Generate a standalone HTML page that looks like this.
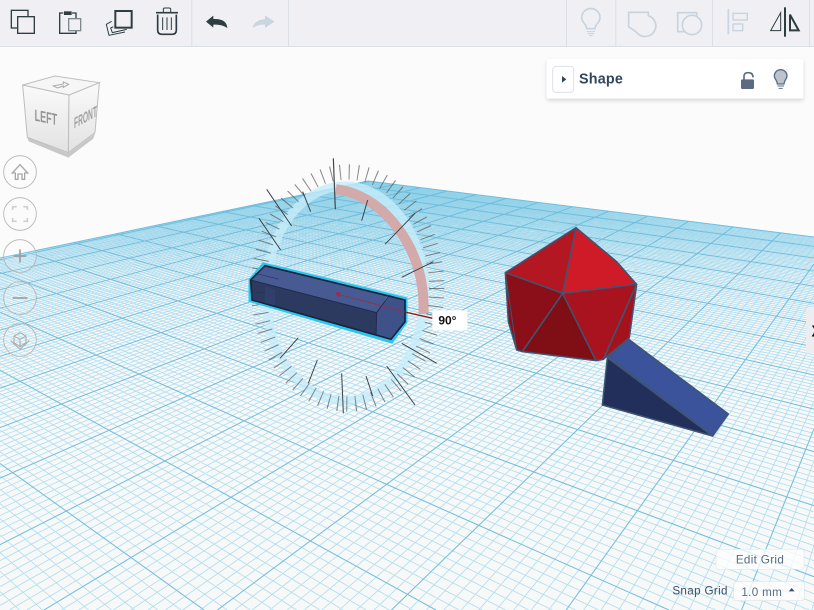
<!DOCTYPE html>
<html><head><meta charset="utf-8"><title>Workplane</title>
<style>
html,body{margin:0;padding:0;background:#fbfbfb;width:814px;height:610px;overflow:hidden;}
#stage{position:relative;width:814px;height:610px;overflow:hidden;contain:paint;background:#fbfbfb;font-family:"Liberation Sans",sans-serif;}
svg{position:absolute;left:0;top:0;}
</style></head><body><div id="stage">
<svg id="g" width="814" height="610" viewBox="0 0 814 610">
<polygon points="368,181 814,237 814,610 0,610 0,258" fill="#f7f8f8"/>
<path id="mn" fill="none" stroke="#aeddf0" stroke-width=".8"/>
<path id="mj" fill="none" stroke="#74bedb" stroke-width="1"/>
</svg>
<script>
(function(){
function P(t,s){var w=1-t-s;return ((368+555*t-963*s)/w).toFixed(2)+' '+((181-65*t-56*s)/w).toFixed(2);}
var mn='',mj='',i,v,a,b,d;
for(i=-128;i<=60;i++){v=.4307+i*.00334;if(v<0)continue;
 a=Math.max(0,(963*v-368)/555);
 b=Math.min((429-554*v)/545,(446+149*v)/1369);
 if(b<=a)continue;
 d='M'+P(a,v)+'L'+P(b,v);mn+=d;if(i%10==0)mj+=d;}
for(i=-111;i<=80;i++){v=.2834+i*.00255;if(v<0)continue;
 a=Math.max(0,(1369*v-446)/149);
 b=Math.min((429-545*v)/554,(368+555*v)/963);
 if(b<=a)continue;
 d='M'+P(v,a)+'L'+P(v,b);mn+=d;if(i%10==0)mj+=d;}
document.getElementById('mn').setAttribute('d',mn);
document.getElementById('mj').setAttribute('d',mj);
})();
</script>
<svg width="814" height="610" viewBox="0 0 2442 1830" font-family="'Liberation Sans',sans-serif">
<defs>
<linearGradient id="far" x1="0" y1="540" x2="0" y2="820" gradientUnits="userSpaceOnUse"><stop offset="0" stop-color="#5fbcdc" stop-opacity=".4"/><stop offset="1" stop-color="#5fbcdc" stop-opacity="0"/></linearGradient>
<linearGradient id="cl" x1="0" y1="0" x2="0" y2="1"><stop offset="0" stop-color="#fafafa"/><stop offset="1" stop-color="#e2e2e2"/></linearGradient>
<filter id="sh" x="-5%" y="-20%" width="110%" height="150%"><feGaussianBlur stdDeviation="6"/></filter>
</defs>
<polygon points="1104,543 2442,711 2442,820 0,820 0,774" fill="url(#far)"/>
<path d="M0 774L1104 543L2442 711" fill="none" stroke="#6cc0de" stroke-width="3"/>

<!-- toolbar -->
<rect width="2442" height="138" fill="#f0f0f4"/>
<rect y="138" width="2442" height="3" fill="#dcdee6"/>
<g fill="#dcdee6"><rect x="574" width="3" height="138"/><rect x="864" width="3" height="138"/><rect x="1698" width="3" height="138"/><rect x="1846" width="3" height="138"/><rect x="2136" width="3" height="138"/><rect x="2427" width="3" height="138"/></g>

<g fill="none" stroke="#2e3d42" stroke-width="4">
<rect x="34" y="31" width="50" height="53"/>
<rect x="53" y="50" width="50" height="50" fill="#f0f0f4"/>
<path d="M190 39H179V100H228V39H216"/>
<rect x="206" y="56" width="36" height="36" fill="#f0f0f4" stroke="#7f898b"/>
<rect x="192" y="34" width="23" height="11" fill="#2e3d42" stroke="none"/>
<path d="M335 64L319 73L327 106L375 96" stroke-width="3"/>
<path d="M340 80L332 84L337 98L380 88" stroke-width="3"/>
<rect x="346" y="33" width="49" height="50" stroke-width="6" fill="#f0f0f4"/>
<path d="M473 44V90Q473 103 486 103H516Q529 103 529 90V44" stroke-width="5"/>
<path d="M468 38H534" stroke-width="5"/>
<path d="M490 36V28Q490 24 494 24H508Q512 24 512 28V36" stroke-width="3"/>
<path d="M488 52V90M501 52V90M514 52V90" stroke-width="3"/>
</g>
<path d="M618 65L640 47V57Q680 55 682 84Q665 72 640 74V83Z" fill="#2e3d42"/>
<path d="M824 65L795 46V57Q762 60 758 84Q775 72 795 74V84Z" fill="#c9d5e1"/>

<g transform="translate(1620,0)">
<g fill="none" stroke="#c8d3df" stroke-width="5">
<path d="M140 86C140 72 125 68 125 53A27 27 0 0 1 180 53C180 68 165 72 165 86Z"/>
<path d="M140 95H165M143 101H162M147 107H158" stroke-width="3"/>
<path d="M266 37H325V47A32 32 0 1 1 290 97L266 80Z"/>
<rect x="413" y="38" width="57" height="57"/>
<circle cx="456" cy="75" r="29" fill="#f0f0f4"/>
<path d="M565 27V103"/>
<rect x="579" y="40" width="43" height="20" stroke-width="4"/>
<rect x="579" y="72" width="29" height="20" stroke-width="4"/>
</g>
<path d="M735 22V110" stroke="#2e3d42" stroke-width="6"/>
<path d="M692 92L722 38V92Z" fill="none" stroke="#2e3d42" stroke-width="3"/>
<path d="M750 44V91H776Z" fill="none" stroke="#2e3d42" stroke-width="6"/>
</g>

<!-- shape panel -->
<g transform="translate(1620,0)">
<rect x="20" y="183" width="770" height="119" rx="6" fill="#000" opacity=".14" filter="url(#sh)"/>
<rect x="20" y="177" width="770" height="119" rx="6" fill="#fff"/>
<rect x="38" y="199" width="63" height="78" rx="10" fill="#fff" stroke="#dde0e8" stroke-width="3"/>
<path d="M66 228L79 238L66 248Z" fill="#2f4560"/>
<text x="117" y="251" font-size="43" font-weight="bold" fill="#2f4560" letter-spacing=".6">Shape</text>
<path d="M612 240V228Q612 218 625 218Q639 218 639 232" fill="none" stroke="#5b6c82" stroke-width="5"/>
<rect x="603" y="238" width="39" height="29" rx="4" fill="#5b6c82"/>
<path d="M712 252C712 240 703 238 703 228A19 19 0 0 1 741 228C741 238 732 240 732 252Z" fill="#bcc3cd" stroke="#5b6c82" stroke-width="4"/>
<path d="M712 258H732M716 265H728" stroke="#5b6c82" stroke-width="3"/>
</g>

<!-- view cube -->
<g transform="translate(0,180)">
<path d="M82 232L205 280L285 220L280 236L205 293L86 244Z" fill="#c8c8c8"/>
<path d="M68 75L207 105L205 278L82 232Z" fill="url(#cl)" stroke="#bdbdbd" stroke-width="3"/>
<path d="M207 105L298 68L285 218L205 278Z" fill="url(#cl)" stroke="#bdbdbd" stroke-width="3"/>
<path d="M68 75L165 48L298 68L207 105Z" fill="#f6f6f6" stroke="#bdbdbd" stroke-width="3"/>
<path d="M160 78L190 72V66L206 73L190 82V78L172 84Z" fill="none" stroke="#aaa" stroke-width="3"/>
<text transform="matrix(1,.2,0,1.8,104,182)" font-size="27" font-weight="bold" fill="#949494">LEFT</text>
<text transform="matrix(1,-.55,0,2.3,222,206)" font-size="20" font-weight="bold" fill="#a0a0a0">FRONT</text>
</g>

<!-- nav buttons -->
<g fill="#fff" fill-opacity=".15" stroke="#b4b4b4" stroke-width="2.5">
<circle cx="60" cy="516" r="49"/><circle cx="60" cy="642" r="49"/><circle cx="60" cy="768" r="49"/><circle cx="60" cy="894" r="49"/><circle cx="60" cy="1020" r="49"/>
</g>
<g fill="none" stroke="#a8a8a8" stroke-width="4">
<path d="M37 519L60 494L83 519H74V538H66V522H54V538H46V519Z"/>
<path d="M38 630V620H50M70 620H82V630M82 654V664H70M50 664H38V654" stroke="#cfcfcf" stroke-width="5"/>
<path d="M60 748V788M41 768H79" stroke="#9a9fa3" stroke-width="5"/>
<path d="M38 894H82" stroke="#9a9fa3" stroke-width="5"/>
<path d="M60 998L78 1008V1028L60 1040L42 1028V1008ZM42 1008L60 1018L78 1008M60 1018V1040" stroke-width="3"/>
<path d="M32 1022L60 1048L88 1022" stroke-width="3"/>
</g>

<!-- rotation ring -->
<g transform="translate(690,450)">
<g fill="none">
<ellipse cx="345" cy="430" rx="238" ry="322" stroke="#c6ecfa" stroke-width="27" opacity=".8"/>
<path d="M318 118C450 130 592 290 580 492" stroke="#d3a9aa" stroke-width="30"/>
<ellipse cx="353" cy="414" rx="267" ry="348" stroke="#555" stroke-width="46" stroke-dasharray="3 24" opacity=".7"/>
</g>
<g stroke="#3c4448" stroke-width="3" fill="none">
<path d="M310 25L316 178" stroke-width="3.5"/>
<path d="M218 125L242 185M110 118L185 228M87 205L152 300M413 150L395 212M555 190L465 283M610 335L515 382"/>
<path d="M335 670L340 790M408 678L428 738M470 648L555 765M515 580L620 640M150 625L205 563M262 630L235 700"/>
</g>

<!-- box -->
<path d="M100 342L528 446V516L485 576L60 452V390Z" fill="none" stroke="#2bc6ee" stroke-width="9"/>
<path d="M105 348L62 390L440 488L475 435Z" fill="#475a92"/>
<path d="M62 390L440 488L438 557L66 450Z" fill="#2c3a60"/>
<path d="M440 488L478 435L525 450V515L483 568L438 557Z" fill="#3f5189"/>
<path d="M105 410L135 418V468L105 460Z" fill="#3f5180" opacity=".3"/>
<path d="M105 347L525 450V515L483 568L66 450L62 390Z" fill="none" stroke="#18233f" stroke-width="5"/>
<path d="M62 390L440 488L438 557M440 488L478 435" fill="none" stroke="#1f2b4d" stroke-width="3"/>
<path d="M75 370L145 387M78 427H105" stroke="#1f2b4d" stroke-width="2" opacity=".7"/>
<path d="M325 433L525 486" stroke="#a02a3a" stroke-width="2"/>
<path d="M525 486L608 505" stroke="#8c1818" stroke-width="4"/>
<circle cx="325" cy="433" r="7" fill="#a02a4a"/>
<rect x="607" y="481" width="105" height="60" rx="4" fill="#fff"/>
<text x="625" y="524" font-size="36" font-weight="bold" fill="#111">90°</text>
</g>

<!-- polyhedron -->
<g transform="translate(1470,645)" stroke="#3e5573" stroke-width="4.5" stroke-linejoin="round">
<path d="M258 38L46 173L218 235Z" fill="#b31722"/>
<path d="M258 38L380 140L440 208L218 235Z" fill="#cf1a28"/>
<path d="M46 173L218 235L97 410L80 405L55 320Z" fill="#8a0f18"/>
<path d="M218 235L318 437L97 410Z" fill="#7f0f15"/>
<path d="M218 235L440 208L340 433L318 437Z" fill="#a9131f"/>
<path d="M440 208L418 368L340 433Z" fill="#a5121c"/>
<path d="M46 173L80 405" fill="none" stroke-width="3"/>
<path d="M415 372L355 425L668 663L715 597Z" fill="#3a539b"/>
<path d="M352 428L337 570L668 663Z" fill="#222f5a"/>
</g>

<!-- bottom controls -->
<g transform="translate(1950,1590)">
<rect x="198" y="58" width="264" height="60" rx="8" fill="#fff" fill-opacity=".75" stroke="#e6e8ec" stroke-width="2"/>
<text x="330" y="100" text-anchor="middle" font-size="35" fill="#5b6b7c" letter-spacing="1">Edit Grid</text>
<text x="67" y="194" font-size="35" fill="#3c4f66" letter-spacing="1">Snap Grid</text>
<rect x="251" y="154" width="212" height="58" rx="8" fill="#fff" fill-opacity=".75" stroke="#e0e2e7" stroke-width="2"/>
<text x="274" y="198" font-size="35" fill="#5b6b7c" letter-spacing="1">1.0 mm</text>
<path d="M416 184L425 174L434 184Z" fill="#3c4f66"/>
</g>

<!-- right tab -->
<rect x="2418" y="924" width="24" height="135" fill="#ecedf1"/>
<text x="2434" y="1010" font-size="48" font-weight="bold" fill="#111">X</text>
</svg>
</div></body></html>
